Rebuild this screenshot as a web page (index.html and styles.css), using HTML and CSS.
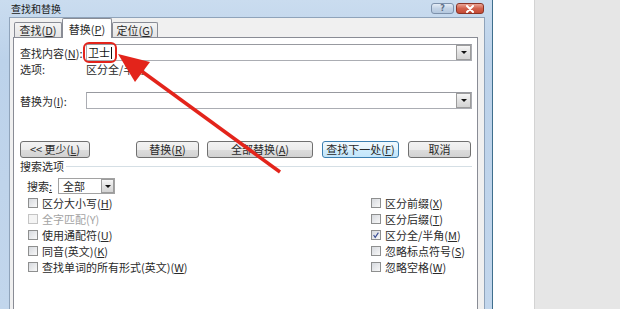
FILE: index.html
```html
<!DOCTYPE html>
<html lang="zh-CN">
<head>
    <meta charset="UTF-8">
    <title>查找和替换</title>
    <link rel="stylesheet" href="styles.css">
</head>
<body>
<div class="screen">
    <div class="window">
        <div class="titlebar">
            <span class="title">查找和替换</span>
            <span class="tb-btn help">?</span>
            <span class="tb-btn close">
                <svg viewBox="0 0 12 8" width="12" height="8"><path d="M3 1 L9 7 M9 1 L3 7" stroke="#fff" stroke-width="2" stroke-linecap="round"/></svg>
            </span>
        </div>
        <div class="client">
            <div class="tabs">
                <div class="tab t1">查找(<u>D</u>)</div>
                <div class="tab t2 active">替换(<u>P</u>)</div>
                <div class="tab t3">定位(<u>G</u>)</div>
            </div>
            <div class="panel">
                <div class="field">
                    <span class="lbl">查找内容(<u>N</u>):</span>
                    <div class="combo">
                        <span class="mark">卫士<i class="caret"></i></span>
                        <span class="drop"></span>
                    </div>
                </div>
                <div class="field opts">
                    <span class="lbl">选项:</span>
                    <span>区分全/半角</span>
                </div>
                <div class="field repl">
                    <span class="lbl">替换为(<u>I</u>):</span>
                    <div class="combo">
                        <span class="drop"></span>
                    </div>
                </div>

                <div class="buttons">
                    <span class="btn b-less">&lt;&lt; 更少(<u>L</u>)</span>
                    <span class="btn b-repl">替换(<u>R</u>)</span>
                    <span class="btn b-all">全部替换(<u>A</u>)</span>
                    <span class="btn b-next focus">查找下一处(<u>F</u>)</span>
                    <span class="btn b-cancel">取消</span>
                </div>

                <div class="group">
                    <span>搜索选项</span>
                    <span class="rule"></span>
                </div>

                <div class="search-row">
                    <span class="search-lbl">搜索<u>:</u></span>
                    <div class="select">
                        <span>全部</span>
                        <span class="drop"></span>
                    </div>
                </div>

                <div class="checks">
                    <div class="chk"><span class="box"></span>区分大小写(<u>H</u>)</div>
                    <div class="chk"><span class="box"></span>区分前缀(<u>X</u>)</div>
                    <div class="chk disabled"><span class="box"></span>全字匹配(Y)</div>
                    <div class="chk"><span class="box"></span>区分后缀(<u>T</u>)</div>
                    <div class="chk"><span class="box"></span>使用通配符(<u>U</u>)</div>
                    <div class="chk"><span class="box checked">
                        <svg viewBox="0 0 10 10" width="8" height="8"><polyline points="2 5 4 8 8 2" fill="none" stroke="#3b4f96" stroke-width="1.4"/></svg>
                    </span>区分全/半角(<u>M</u>)</div>
                    <div class="chk"><span class="box"></span>同音(英文)(<u>K</u>)</div>
                    <div class="chk"><span class="box"></span>忽略标点符号(<u>S</u>)</div>
                    <div class="chk"><span class="box"></span>查找单词的所有形式(英文)(<u>W</u>)</div>
                    <div class="chk"><span class="box"></span>忽略空格(<u>W</u>)</div>
                </div>
            </div>
        </div>
    </div>
    <div class="page-white"></div>
    <div class="page-gray"></div>

    <!-- red annotation arrow -->
    <svg class="arrow" viewBox="0 0 620 309" width="620" height="309">
        <line x1="140" y1="70" x2="280" y2="172" stroke="#e3241b" stroke-width="3.5"/>
        <polygon points="118,54 135,82 150,62" fill="#e3241b"/>
    </svg>
</div>
</body>
</html>
```

FILE: styles.css
```css
* {
    box-sizing: border-box;
}
body {
    margin: 0;
    font-family: "Noto Sans CJK SC", "Liberation Sans", sans-serif;
    font-size: 11px;
    color: #2a2a2a;
}
u {
    text-decoration: underline;
    text-underline-offset: 1px;
}
.screen {
    position: relative;
    width: 620px;
    height: 309px;
    overflow: hidden;
    display: flex;
    background: #e6e6e6;
}

/* window frame */
.window {
    width: 493px;
    flex: none;
    display: flex;
    flex-direction: column;
    background: linear-gradient(#cadcef, #bcd2ea 60px, #c2d6ec);
    border-right: 1px solid #3f6f8d;
}
.titlebar {
    height: 17px;
    flex: none;
    display: flex;
    align-items: flex-start;
    padding: 3px 8px 0 11px;
}
.title {
    font-size: 10px;
    line-height: 11px;
    color: #1a1a1a;
}
.tb-btn {
    height: 11px;
    border-radius: 3px;
    display: flex;
    align-items: center;
    justify-content: center;
}
.help {
    width: 23px;
    margin-left: auto;
    background: linear-gradient(#e4ecf6, #c3d3e6 50%, #b4c8df);
    border: 1px solid #7d91ab;
    font-family: "DejaVu Sans", sans-serif;
    font-size: 8px;
    font-weight: bold;
    line-height: 9px;
    color: #5d6f88;
}
.close {
    width: 28px;
    margin-left: 2px;
    background: linear-gradient(#eaa596, #d2614c 50%, #c44a35);
    border: 1px solid #8a3427;
}

.client {
    flex: 1;
    margin: 0 7px 0 9px;
    background: #f0f0f0;
    border: 1px solid #8fa3ba;
    border-bottom: none;
}

/* tabs */
.tabs {
    display: flex;
    align-items: flex-end;
    height: 19px;
    padding-left: 4px;
}
.tab {
    height: 15px;
    border: 1px solid #898c95;
    border-bottom: none;
    border-radius: 2px 2px 0 0;
    background: linear-gradient(#f4f4f4, #e4e4e4);
    text-align: center;
    line-height: 14px;
}
.t1 { width: 48px; }
.t2 { width: 50px; }
.t3 { width: 46px; }
.tab.active {
    height: 20px;
    margin-bottom: -1px;
    padding-top: 2px;
    line-height: 16px;
    background: #fff;
    position: relative;
}

.panel {
    height: 300px;
    margin: 0 6px 0 3px;
    padding: 6px 5px 0 6px;
    background: #fff;
    border: 1px solid #898c95;
}

/* text fields */
.field {
    display: flex;
    align-items: center;
}
.lbl {
    width: 66px;
    flex: none;
}
.combo {
    width: 386px;
    height: 17px;
    display: flex;
    align-items: center;
    background: #fff;
    border: 1px solid #abadb3;
    border-top-color: #989aa0;
}
.drop {
    width: 15px;
    height: 15px;
    margin-left: auto;
    display: flex;
    align-items: center;
    justify-content: center;
    background: linear-gradient(#f6f6f6, #e2e2e2 50%, #d4d4d4);
    border: 1px solid #9c9c9c;
}
.drop::after {
    content: "";
    border-left: 3px solid transparent;
    border-right: 3px solid transparent;
    border-top: 3px solid #111;
}
.mark {
    display: flex;
    align-items: center;
    height: 13px;
    line-height: 13px;
    padding: 0 1px;
    border-radius: 2px;
    outline: 2px solid #e3241b;
    outline-offset: 2px;
    color: #111;
}
.caret {
    display: inline-block;
    width: 1px;
    height: 12px;
    margin-left: 1px;
    background: #111;
}
.opts {
    margin-top: 1px;
    line-height: 14px;
}
.repl {
    margin-top: 16px;
}

/* buttons */
.buttons {
    display: flex;
    margin-top: 32px;
}
.btn {
    height: 17px;
    border: 1px solid #707070;
    border-radius: 3px;
    background: linear-gradient(#f3f3f3, #ebebeb 50%, #dddddd 51%, #d2d2d2);
    text-align: center;
    line-height: 15px;
    flex: none;
}
.b-less { width: 70px; }
.b-repl { width: 63px; margin-left: 46px; }
.b-all { width: 106px; margin-left: 8px; }
.b-next { width: 77px; margin-left: 9px; }
.b-cancel { width: 63px; margin-left: 9px; }
.btn.focus {
    border-color: #3c7fb1;
    background: linear-gradient(#f1f9fe, #e3f3fc 50%, #cdebfc 51%, #c4e6fb);
}

/* search options */
.group {
    display: flex;
    align-items: center;
    margin-top: 1px;
    line-height: 14px;
}
.rule {
    flex: 1;
    height: 1px;
    margin-left: 2px;
    background: #d5dfe5;
}
.search-row {
    display: flex;
    align-items: center;
    margin-top: 5px;
    padding-left: 7px;
}
.search-lbl {
    width: 31px;
}
.select {
    width: 57px;
    height: 16px;
    display: flex;
    align-items: center;
    padding-left: 4px;
    border: 1px solid #a2a2a2;
    background: #fff;
    line-height: 14px;
}
.select .drop {
    height: 14px;
    width: 13px;
}

.checks {
    display: grid;
    grid-template-columns: 343px auto;
    grid-auto-rows: 16px;
    margin-top: 1px;
    padding-left: 8px;
}
.chk {
    display: flex;
    align-items: center;
    white-space: nowrap;
}
.box {
    width: 10px;
    height: 10px;
    margin-right: 4px;
    flex: none;
    display: flex;
    align-items: center;
    justify-content: center;
    border: 1px solid #8e8f8f;
    background: linear-gradient(135deg, #d6d9de, #f8f8f8);
}
.chk.disabled {
    color: #a3a3a3;
}
.chk.disabled .box {
    border-color: #c4c4c4;
    background: #f4f4f4;
}

/* document behind the dialog */
.page-white {
    width: 42px;
    flex: none;
    background: #fff;
    border-right: 1px solid #d3d3d3;
}
.page-gray {
    flex: 1;
    background: #e6e6e6;
}

.arrow {
    position: absolute;
    left: 0;
    top: 0;
    pointer-events: none;
}
```
